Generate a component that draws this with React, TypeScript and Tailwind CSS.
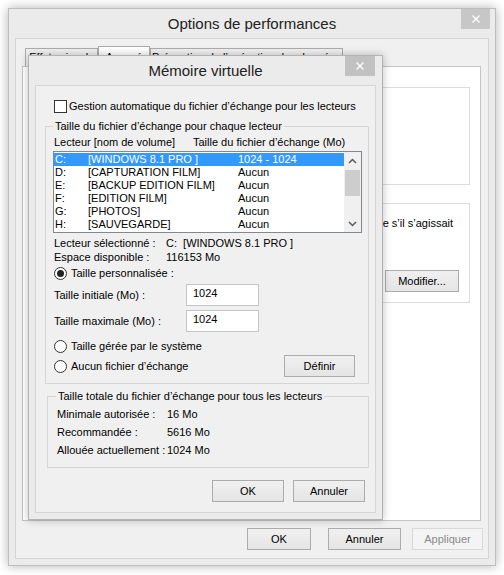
import React from 'react';

type Drive = { letter: string; name: string; size: string; selected?: boolean };

const drives: Drive[] = [
  { letter: 'C:', name: '[WINDOWS 8.1 PRO ]', size: '1024 - 1024', selected: true },
  { letter: 'D:', name: '[CAPTURATION FILM]', size: 'Aucun' },
  { letter: 'E:', name: '[BACKUP EDITION FILM]', size: 'Aucun' },
  { letter: 'F:', name: '[EDITION FILM]', size: 'Aucun' },
  { letter: 'G:', name: '[PHOTOS]', size: 'Aucun' },
  { letter: 'H:', name: '[SAUVEGARDE]', size: 'Aucun' },
];

function CloseButton({ className }: { className: string }) {
  return (
    <div className={`absolute top-0 h-[20px] flex items-center justify-center ${className}`}>
      <svg width="10" height="8" viewBox="0 0 10 8" aria-hidden="true">
        <path d="M1.5 0.5 L8.5 7.5 M8.5 0.5 L1.5 7.5" stroke="#ffffff" strokeWidth="1.4" />
      </svg>
    </div>
  );
}

function Button({
  label,
  className = '',
  disabled = false,
}: {
  label: string;
  className?: string;
  disabled?: boolean;
}) {
  return (
    <button
      type="button"
      className={`h-[22px] flex items-center justify-center border ${
        disabled
          ? 'border-[#d9d9d9] bg-[#f4f4f4] text-[#8a8a8a]'
          : 'border-[#acacac] bg-linear-to-b from-[#f0f0f0] to-[#e5e5e5] text-black'
      } ${className}`}
    >
      {label}
    </button>
  );
}

function Radio({ checked = false }: { checked?: boolean }) {
  return (
    <div className="w-[13px] h-[13px] shrink-0 rounded-full border border-[#333] bg-white flex items-center justify-center">
      {checked && <div className="w-[7px] h-[7px] rounded-full bg-[#222]" />}
    </div>
  );
}

function Tab({ label, className, selected = false }: { label: string; className: string; selected?: boolean }) {
  return (
    <div
      className={`border border-b-0 border-[#acacac] whitespace-nowrap overflow-hidden flex justify-center ${
        selected ? 'h-[21px] bg-white pt-[4px]' : 'h-[18px] mb-[1px] bg-[#f0f0f0] pt-[2px]'
      } ${className}`}
    >
      {label}
    </div>
  );
}

function Chevron({ up }: { up?: boolean }) {
  return (
    <svg width="9" height="6" viewBox="0 0 9 6" aria-hidden="true">
      <path d={up ? 'M1 5 L4.5 1.5 L8 5' : 'M1 1 L4.5 4.5 L8 1'} stroke="#5a5a5a" strokeWidth="1.5" fill="none" />
    </svg>
  );
}

export default function App() {
  return (
    <div className="relative w-[504px] h-[575px] bg-white overflow-hidden font-['Liberation_Sans',Arial,sans-serif] text-[11px] leading-[13px] text-black">
      {/* Options de performances (window behind) */}
      <div className="absolute left-[8px] top-[8px] w-[488px] h-[558px] border border-[#bdbdbd] bg-[#ebebeb] shadow-[0_0_10px_rgba(0,0,0,0.3)] flex flex-col">
        <div className="relative h-[29px] shrink-0 flex items-center justify-center text-[15px] leading-[18px] text-[#222]">
          Options de performances
          <CloseButton className="right-[5px] w-[29px] bg-[#c7c7c7]" />
        </div>
        <div className="mx-[6px] h-[521px] border border-[#d5d5d5] bg-[#f0f0f0] flex flex-col">
          <div className="ml-[9px] mt-[7px] h-[21px] -mb-[1px] flex items-end">
            <Tab label="Effets visuels" className="w-[73px]" />
            <Tab label="Avancé" className="w-[52px]" selected />
            <Tab label="Prévention de l’exécution des données" className="w-[193px]" />
          </div>
          <div className="ml-[6px] w-[459px] h-[455px] border border-[#c4c4c4] bg-white flex flex-col">
            <div className="mx-[10px] mt-[20px] h-[98px] border border-[#dcdcdc]" />
            <div className="mx-[10px] mt-[18px] h-[100px] border border-[#dcdcdc] flex flex-col overflow-hidden">
              <div className="mt-[13px] pr-[16px] h-[13px] flex justify-end">
                <span className="whitespace-nowrap">comme s’il s’agissait</span>
              </div>
              <div className="mt-[40px] flex justify-end pr-[10px]">
                <Button label="Modifier..." className="w-[74px]" />
              </div>
            </div>
          </div>
          <div className="mt-[7px] pr-[5px] flex justify-end">
            <Button label="OK" className="w-[64px]" />
            <Button label="Annuler" className="ml-[17px] w-[73px]" />
            <Button label="Appliquer" className="ml-[11px] w-[71px]" disabled />
          </div>
        </div>
      </div>

      {/* Mémoire virtuelle (active dialog) */}
      <div className="absolute left-[28px] top-[55px] w-[355px] h-[465px] border border-[#b3b3b3] bg-[#ebebeb] shadow-[0_0_8px_rgba(0,0,0,0.25)] flex flex-col">
        <div className="relative h-[29px] shrink-0 flex items-center justify-center text-[15px] leading-[18px] text-[#222]">
          Mémoire virtuelle
          <CloseButton className="right-[7px] w-[30px] bg-[#c1c1c1]" />
        </div>
        <div className="mx-[6px] h-[428px] border border-[#d5d5d5] bg-[#f0f0f0] flex flex-col">
          <div className="mt-[14px] pl-[18px] h-[13px] flex items-center gap-[2px]">
            <div className="w-[13px] h-[13px] border border-[#333] bg-white" />
            <span>Gestion automatique du fichier d’échange pour les lecteurs</span>
          </div>

          <div className="ml-[9px] mt-[13px] w-[324px] h-[258px] border border-[#d5d5d5] relative flex flex-col">
            <span className="absolute -top-[7px] left-[7px] px-[2px] bg-[#f0f0f0]">
              Taille du fichier d’échange pour chaque lecteur
            </span>
            <div className="mt-[9px] pl-[8px] h-[13px] flex">
              <span className="w-[139px]">Lecteur [nom de volume]</span>
              <span>Taille du fichier d’échange (Mo)</span>
            </div>
            <div className="mt-[2px] ml-[7px] w-[309px] h-[82px] border border-[#828790] bg-white flex">
              <div className="flex-1 pt-[1px]">
                {drives.map((d) => (
                  <div
                    key={d.letter}
                    className={`h-[13px] flex whitespace-nowrap ${d.selected ? 'bg-[#3399ff] text-white' : ''}`}
                  >
                    <span className="w-[34px] pl-[1px]">{d.letter}</span>
                    <span className="w-[150px]">{d.name}</span>
                    <span>{d.size}</span>
                  </div>
                ))}
              </div>
              <div className="w-[17px] bg-[#f0f0f0] flex flex-col items-center">
                <div className="h-[17px] flex items-center justify-center">
                  <Chevron up />
                </div>
                <div className="mt-[1px] w-[15px] h-[26px] bg-[#cdcdcd]" />
                <div className="mt-auto h-[17px] flex items-center justify-center">
                  <Chevron />
                </div>
              </div>
            </div>
            <div className="mt-[3px] pl-[8px] h-[14px] flex items-center">
              <span className="w-[112px]">Lecteur sélectionné :</span>
              <span className="whitespace-pre">C:  [WINDOWS 8.1 PRO ]</span>
            </div>
            <div className="pl-[8px] h-[14px] flex items-center">
              <span className="w-[112px]">Espace disponible :</span>
              <span>116153 Mo</span>
            </div>
            <div className="mt-[3px] pl-[8px] h-[13px] flex items-center gap-[4px]">
              <Radio checked />
              <span>Taille personnalisée :</span>
            </div>
            <div className="mt-[4px] pl-[8px] h-[22px] flex items-center">
              <span className="w-[132px]">Taille initiale (Mo) :</span>
              <div className="w-[73px] h-[22px] border border-[#c4c4c4] bg-white pl-[6px] pt-[2px]">1024</div>
            </div>
            <div className="mt-[4px] pl-[8px] h-[22px] flex items-center">
              <span className="w-[132px]">Taille maximale (Mo) :</span>
              <div className="w-[73px] h-[22px] border border-[#c4c4c4] bg-white pl-[6px] pt-[2px]">1024</div>
            </div>
            <div className="mt-[8px] pl-[8px] h-[13px] flex items-center gap-[4px]">
              <Radio />
              <span>Taille gérée par le système</span>
            </div>
            <div className="mt-[2px] pl-[8px] h-[22px] flex items-center gap-[4px]">
              <Radio />
              <span>Aucun fichier d’échange</span>
              <Button label="Définir" className="ml-auto mr-[13px] w-[71px]" />
            </div>
          </div>

          <div className="ml-[11px] mt-[12px] w-[322px] h-[72px] border border-[#d5d5d5] relative flex flex-col">
            <span className="absolute -top-[7px] left-[8px] px-[2px] bg-[#f0f0f0]">
              Taille totale du fichier d’échange pour tous les lecteurs
            </span>
            <div className="mt-[8px] pl-[9px] h-[18px] flex items-center">
              <span className="w-[110px]">Minimale autorisée :</span>
              <span>16 Mo</span>
            </div>
            <div className="pl-[9px] h-[18px] flex items-center">
              <span className="w-[110px]">Recommandée :</span>
              <span>5616 Mo</span>
            </div>
            <div className="pl-[9px] h-[18px] flex items-center">
              <span className="w-[110px]">Allouée actuellement :</span>
              <span>1024 Mo</span>
            </div>
          </div>

          <div className="mt-[12px] pr-[10px] flex justify-end gap-[9px]">
            <Button label="OK" className="w-[72px]" />
            <Button label="Annuler" className="w-[72px]" />
          </div>
        </div>
      </div>
    </div>
  );
}
